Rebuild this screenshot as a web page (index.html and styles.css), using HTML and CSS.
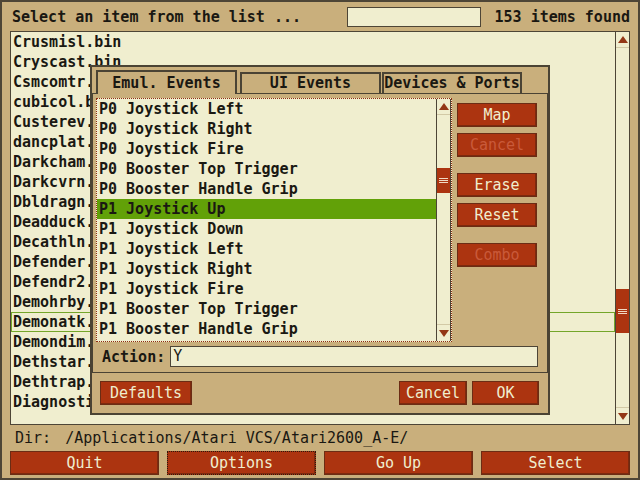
FILE: index.html
```html
<!DOCTYPE html>
<html>
<head>
<meta charset="utf-8">
<link rel="stylesheet" href="styles.css">
</head>
<body>
<div class="app">
  <div class="header">
    <span class="title">Select an item from the list ...</span>
    <span class="filter"></span>
    <span class="count">153 items found</span>
  </div>
  <div class="list main-list">
    <div class="rows">
      <div class="row">Crusmisl.bin</div>
      <div class="row">Cryscast.bin</div>
      <div class="row">Csmcomtr.bin</div>
      <div class="row">cubicol.bin</div>
      <div class="row">Custerev.bin</div>
      <div class="row">dancplat.bin</div>
      <div class="row">Darkcham.bin</div>
      <div class="row">Darkcvrn.bin</div>
      <div class="row">Dbldragn.bin</div>
      <div class="row">Deadduck.bin</div>
      <div class="row">Decathln.bin</div>
      <div class="row">Defender.bin</div>
      <div class="row">Defendr2.bin</div>
      <div class="row">Demohrby.bin</div>
      <div class="row outlined">Demonatk.bin</div>
      <div class="row">Demondim.bin</div>
      <div class="row">Dethstar.bin</div>
      <div class="row">Dethtrap.bin</div>
      <div class="row">Diagnostic.bin</div>
    </div>
    <div class="scrollbar">
      <div class="arrow up"></div>
      <div class="track"><div class="thumb" style="margin-top:241px;height:44px"></div></div>
      <div class="arrow down"></div>
    </div>
  </div>
  <div class="dir"><span class="dir-label">Dir:</span><span class="dir-path">/Applications/Atari VCS/Atari2600_A-E/</span></div>
  <div class="buttons">
    <div class="btn">Quit</div>
    <div class="btn focus">Options</div>
    <div class="btn">Go Up</div>
    <div class="btn">Select</div>
  </div>

  <div class="dialog">
    <div class="tabs">
      <div class="tab active">Emul. Events</div>
      <div class="tab ui">UI Events</div>
      <div class="tab dev">Devices &amp; Ports</div>
    </div>
    <div class="pane">
      <div class="pane-top">
        <div class="list event-list">
          <div class="rows">
            <div class="row">P0 Joystick Left</div>
            <div class="row">P0 Joystick Right</div>
            <div class="row">P0 Joystick Fire</div>
            <div class="row">P0 Booster Top Trigger</div>
            <div class="row">P0 Booster Handle Grip</div>
            <div class="row selected">P1 Joystick Up</div>
            <div class="row">P1 Joystick Down</div>
            <div class="row">P1 Joystick Left</div>
            <div class="row">P1 Joystick Right</div>
            <div class="row">P1 Joystick Fire</div>
            <div class="row">P1 Booster Top Trigger</div>
            <div class="row">P1 Booster Handle Grip</div>
          </div>
          <div class="scrollbar">
            <div class="arrow up"></div>
            <div class="track"><div class="thumb" style="margin-top:53px;height:25px"></div></div>
            <div class="arrow down"></div>
          </div>
        </div>
        <div class="side">
          <div class="btn side-btn">Map</div>
          <div class="btn side-btn disabled gap-s">Cancel</div>
          <div class="btn side-btn gap-l">Erase</div>
          <div class="btn side-btn gap-s">Reset</div>
          <div class="btn side-btn disabled gap-l">Combo</div>
        </div>
      </div>
      <div class="action">
        <span class="action-label">Action:</span>
        <span class="action-field">Y</span>
      </div>
    </div>
    <div class="footer">
      <div class="btn defaults">Defaults</div>
      <div class="spacer"></div>
      <div class="btn cancel">Cancel</div>
      <div class="btn ok">OK</div>
    </div>
  </div>
</div>
</body>
</html>
```

FILE: styles.css
```css
* { box-sizing: border-box; }
html, body { margin: 0; padding: 0; }
body {
  width: 640px;
  height: 480px;
  overflow: hidden;
  background: #c9af7c;
  font-family: "DejaVu Sans Mono", "Liberation Mono", monospace;
  font-size: 15px;
  color: #1a1812;
}
.app {
  position: relative;
  width: 640px;
  height: 480px;
  border: 2px solid #4d4536;
  padding: 5px 8px 3px 8px;
  display: flex;
  flex-direction: column;
  background: #c9af7c;
}
.header {
  display: flex;
  align-items: center;
  height: 20px;
  margin-bottom: 4px;
}
.title { flex: 1; font-weight: bold; padding-left: 2px; white-space: pre; }
.filter {
  width: 134px;
  height: 20px;
  background: #f0eecf;
  border: 1px solid #4d4536;
  margin-right: 14px;
}
.count { font-weight: bold; }

.list { display: flex; background: #f0eecf; }
.main-list {
  height: 394px;
  border: 1px solid #4d4536;
}
.rows { flex: 1; overflow: hidden; }
.row {
  height: 20px;
  line-height: 20px;
  padding-left: 2px;
  font-weight: bold;
  white-space: pre;
  overflow: hidden;
}
.row.outlined { border: 1px solid #74a62a; line-height: 18px; padding-left: 1px; }
.row.selected { background: #62a108; }

.scrollbar {
  width: 14px;
  border-left: 1px solid #4d4536;
  display: flex;
  flex-direction: column;
}
.arrow {
  height: 16px;
  display: flex;
  align-items: center;
  justify-content: center;
}
.arrow.up { border-bottom: 1px solid #d2c9a6; }
.arrow.down { border-top: 1px solid #d2c9a6; height: 17px; }
.arrow.up::after {
  content: "";
  border-left: 5px solid transparent;
  border-right: 5px solid transparent;
  border-bottom: 7px solid #933716;
}
.arrow.down::after {
  content: "";
  border-left: 5px solid transparent;
  border-right: 5px solid transparent;
  border-top: 7px solid #933716;
}
.track { flex: 1; }
.thumb {
  background: #ac3410;
  display: flex;
  align-items: center;
  justify-content: center;
}
.thumb::after {
  content: "";
  width: 9px;
  height: 5px;
  background: repeating-linear-gradient(to bottom, #f0d9c4 0 1px, transparent 1px 2px);
}

.dir {
  height: 20px;
  line-height: 20px;
  margin-top: 3px;
  padding-left: 5px;
  white-space: pre;
}
.dir-path { margin-left: 14px; }

.buttons {
  display: grid;
  grid-template-columns: repeat(4, 1fr);
  gap: 8px;
  margin-top: 3px;
  height: 24px;
}
.btn {
  background: #ac3410;
  color: #f0eecf;
  border: 1px solid #6b2c14;
  box-shadow: inset -1px -1px 0 #7d2a0e;
  text-align: center;
  height: 24px;
  line-height: 22px;
  white-space: pre;
}
.btn.focus { border: 1px dotted #2a1a0e; }
.btn.disabled { color: #c95a3a; }

.dialog {
  position: absolute;
  left: 88px;
  top: 63px;
  width: 460px;
  height: 350px;
  border: 2px solid #4a4334;
  background: #c9af7c;
  display: flex;
  flex-direction: column;
}
.tabs {
  display: flex;
  align-items: flex-end;
  height: 26px;
  padding: 3px 0 0 4px;
}
.tab {
  height: 21px;
  line-height: 19px;
  border: 2px solid #4a4334;
  border-bottom: none;
  text-align: center;
  font-weight: bold;
  background: #c9af7c;
  white-space: pre;
}
.tab.active {
  width: 141px;
  height: 24px;
  line-height: 22px;
  margin-bottom: -1px;
  margin-right: 3px;
  position: relative;
  z-index: 1;
}
.tab.ui { width: 141px; margin-right: 1px; }
.tab.dev { width: 140px; }

.pane {
  height: 280px;
  border: 1px solid #4a4334;
  padding: 4px 0 0 3px;
}
.pane-top { display: flex; }
.event-list {
  width: 356px;
  height: 244px;
  border: 1px dotted #8e2c10;
}
.event-list .scrollbar { border-right: 1px solid #4d4536; width: 15px; }
.side {
  width: 80px;
  margin-left: 5px;
  padding-top: 5px;
  display: flex;
  flex-direction: column;
}
.gap-s { margin-top: 6px; }
.gap-l { margin-top: 16px; }

.action {
  display: flex;
  align-items: center;
  height: 21px;
  margin-top: 4px;
  padding-left: 6px;
}
.action-label { font-weight: bold; }
.action-field {
  width: 368px;
  height: 21px;
  margin-left: 5px;
  background: #f0eecf;
  border: 1px solid #4d4536;
  line-height: 19px;
  padding-left: 2px;
}

.footer {
  display: flex;
  padding: 8px 9px 0 8px;
}
.spacer { flex: 1; }
.defaults { width: 92px; }
.cancel { width: 68px; margin-right: 5px; }
.ok { width: 67px; }
```
